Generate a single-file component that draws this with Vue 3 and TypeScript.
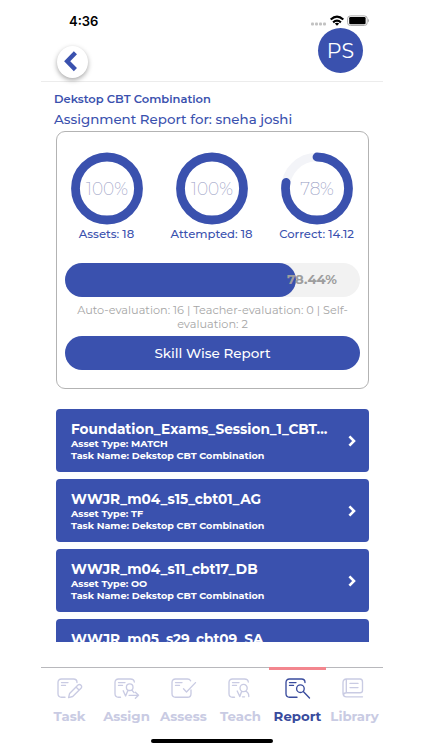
<script setup lang="ts">
interface Ring {
  percent: number
  label: string
}
interface Asset {
  name: string
  type?: string
}
interface Tab {
  label: string
  icon: string
  active?: boolean
}

const circumference = 2 * Math.PI * 31.5

const rings: Ring[] = [
  { percent: 100, label: 'Assets: 18' },
  { percent: 100, label: 'Attempted: 18' },
  { percent: 78, label: 'Correct: 14.12' },
]

const assets: Asset[] = [
  { name: 'Foundation_Exams_Session_1_CBT...', type: 'MATCH' },
  { name: 'WWJR_m04_s15_cbt01_AG', type: 'TF' },
  { name: 'WWJR_m04_s11_cbt17_DB', type: 'OO' },
  { name: 'WWJR_m05_s29_cbt09_SA' },
]

const frame = 'M6.5 19.2H4.5Q1 19.2 1 15.7V4.5Q1 1 4.5 1H16.5Q20 1 20.3 4'
const lines = 'M4.5 4.6H11M4.5 7.4H8.5'
const person = 'M12.4 9.2a3.3 3.3 0 1 0 6.6 0a3.3 3.3 0 1 0 -6.6 0M14 12.2L11.6 18L9.2 12.8'

const tabs: Tab[] = [
  { label: 'Task', icon: `M8 19.2H4.5Q1 19.2 1 15.7V4.5Q1 1 4.5 1H16.5Q20 1 20 4.5${lines}M11.6 19.6L12.6 15.4L21 7Q22.6 5.8 24 7.2Q25.3 8.6 24 10.2L15.7 18.5ZM19 9L22 12` },
  { label: 'Assign', icon: `${frame}${lines}${person}M17.7 12L20 14.6M15 17.3H24.5M21.4 14.2L24.5 17.3L21.4 20.3` },
  { label: 'Assess', icon: `M20 12V15.7Q20 19.2 16.5 19.2H4.5Q1 19.2 1 15.7V4.5Q1 1 4.5 1H16.5Q18.7 1 19.6 2.8${lines}M12.5 10.8L15.5 14L24.5 4.6` },
  { label: 'Teach', icon: `${frame}${lines}M12 10a3.6 3.6 0 1 0 7.2 0a3.6 3.6 0 1 0 -7.2 0M13.7 13.2L11.8 18.5L9.2 13M17.7 13.2Q20.8 14.4 20.8 18.5M14.5 18.8H16.5` },
  { label: 'Report', icon: `M12 19.2H4.5Q1 19.2 1 15.7V4.5Q1 1 4.5 1H16.5Q20 1 20 4.5${lines}M11.6 10.7a3.8 3.8 0 1 0 7.6 0a3.8 3.8 0 1 0 -7.6 0M18.3 13.5L24.5 20`, active: true },
  { label: 'Library', icon: 'M20.5 18.8H4.5Q1 18.8 1 15.3V4.5Q1 1 4.5 1H18Q20.5 1 20.5 4V12.5Q20.5 14.7 18 14.7H4.5Q1.5 14.7 1.5 17M4.3 1.3V14.5M8 5.4H16M8 9.6H16' },
]
</script>

<template>
  <main class="screen">
    <div class="status">
      <span class="time">4:36</span>
      <svg class="signals" width="60" height="12" viewBox="0 0 60 12">
        <g fill="#c2c2c2">
          <rect x="1" y="7.4" width="3" height="3" rx="1" />
          <rect x="5" y="7.4" width="3" height="3" rx="1" />
          <rect x="9" y="7.4" width="3" height="3" rx="1" />
          <rect x="13" y="7.4" width="3" height="3" rx="1" />
        </g>
        <g fill="none" stroke="#000" stroke-width="2.2">
          <path d="M20.7 4.5Q27 -1.2 33.3 4.5" />
          <path d="M23.1 7.3Q27 3.9 30.9 7.3" />
        </g>
        <path d="M24.8 8.5Q27 7 29.2 8.5L27 10.8Z" />
        <rect x="37.6" y="0.9" width="19.6" height="9.6" rx="2.8" fill="#fff" stroke="#aaa" />
        <rect x="39.2" y="2.1" width="16.4" height="7.2" rx="1.2" />
        <path d="M58 3.8Q60 5.6 58 7.4Z" fill="#aaa" />
      </svg>
    </div>

    <header class="header">
      <button class="back" aria-label="Back">
        <svg width="14" height="21" viewBox="0 0 14 21">
          <path d="M11.4 1.8L3.2 10.2L11.4 18.6" fill="none" stroke="#3a51ae" stroke-width="4.4" />
        </svg>
      </button>
      <div class="avatar">PS</div>
    </header>

    <section class="content">
      <h1 class="title">Dekstop CBT Combination</h1>
      <h2 class="subtitle">Assignment Report for: sneha joshi</h2>

      <div class="card">
        <div class="rings">
          <div v-for="ring in rings" :key="ring.label" class="ring">
            <svg width="72" height="73" viewBox="0 0 72 73">
              <circle cx="36" cy="36.5" r="31.5" fill="none" stroke="#f3f4f8" stroke-width="8.6" />
              <circle
                cx="36" cy="36.5" r="31.5" fill="none" stroke="#3a51ae" stroke-width="8.8"
                stroke-linecap="round" transform="rotate(-90 36 36.5)"
                :stroke-dasharray="`${circumference * ring.percent / 100} ${circumference}`"
              />
              <text class="ring-value" x="36" y="43.2" text-anchor="middle">{{ ring.percent }}%</text>
            </svg>
            <span class="ring-label">{{ ring.label }}</span>
          </div>
        </div>

        <div class="progress">
          <div class="fill" :style="{ width: '78.44%' }"></div>
          <span class="progress-value">78.44%</span>
        </div>
        <p class="evaluation">Auto-evaluation: 16 | Teacher-evaluation: 0 | Self-<br>evaluation: 2</p>
        <button class="skill">Skill Wise Report</button>
      </div>

      <div class="list">
        <article v-for="asset in assets" :key="asset.name" class="asset">
          <div class="asset-text">
            <h3>{{ asset.name }}</h3>
            <template v-if="asset.type">
              <p>Asset Type: {{ asset.type }}</p>
              <p>Task Name: Dekstop CBT Combination</p>
            </template>
          </div>
          <svg v-if="asset.type" width="8" height="12" viewBox="0 0 8 12">
            <path d="M1.4 1.3L6 6L1.4 10.7" fill="none" stroke="#fff" stroke-width="2.6" />
          </svg>
        </article>
      </div>
    </section>

    <nav class="tabs">
      <a v-for="tab in tabs" :key="tab.label" class="tab" :class="{ active: tab.active }">
        <svg width="26" height="21" viewBox="0 0 26 21">
          <path :d="tab.icon" />
        </svg>
        <span>{{ tab.label }}</span>
      </a>
    </nav>
    <div class="home"></div>
  </main>
</template>

<style>
body {
  margin: 0;
  background: #fff;
}
</style>

<style scoped>
* {
  box-sizing: border-box;
}
h1, h2, h3, p {
  margin: 0;
  white-space: nowrap;
}
button {
  border: 0;
  padding: 0;
  font: inherit;
}
.screen {
  width: 342px;
  height: 750px;
  margin-left: 41px;
  display: flex;
  flex-direction: column;
  overflow: hidden;
  font-family: Montserrat, Inter, "Open Sans", sans-serif;
  color: #3a51ae;
}
.status {
  display: flex;
  justify-content: space-between;
  height: 28px;
  padding: 15px 13px 0 28px;
  color: #000;
}
.time {
  font-family: Inter, sans-serif;
  font-size: 13px;
  line-height: 12px;
  font-weight: 600;
}
.header {
  display: flex;
  justify-content: space-between;
  height: 54px;
  padding: 0 20px 0 16px;
  border-bottom: 1px solid #ececec;
}
.back {
  display: flex;
  align-items: center;
  justify-content: center;
  width: 31px;
  height: 32px;
  margin-top: 18px;
  padding: 0 4px 2px 0;
  border-radius: 50%;
  background: #fff;
  box-shadow: 0 2px 5px rgba(0, 0, 0, 0.35);
}
.avatar {
  width: 45px;
  height: 45px;
  border-radius: 50%;
  background: #3a51ae;
  color: #fff;
  font-size: 20.5px;
  line-height: 45px;
  font-weight: 400;
  text-align: center;
}
.content {
  height: 560px;
  padding: 9px 14px 0 13px;
  overflow: hidden;
}
.title {
  font-size: 11.5px;
  line-height: 16px;
  font-weight: 600;
}
.subtitle {
  margin-top: 3px;
  font-size: 13.4px;
  line-height: 18px;
  font-weight: 500;
}
.card {
  width: 313px;
  height: 258px;
  margin: 3px 0 0 2px;
  padding: 19.5px 8px 0;
  border: 1px solid #b3b3b3;
  border-radius: 9px;
}
.rings {
  display: grid;
  grid-template-columns: repeat(3, 105px);
  margin-left: -11px;
}
.ring {
  display: flex;
  flex-direction: column;
  align-items: center;
}
.ring svg {
  display: block;
}
.ring-value {
  fill: #9499c2;
  font-size: 19.5px;
  font-weight: 200;
  transform: scaleX(0.87);
  transform-box: fill-box;
  transform-origin: center;
}
.ring-label {
  font-size: 11.6px;
  line-height: 16px;
  font-weight: 500;
  margin-top: 1px;
  white-space: nowrap;
}
.progress {
  position: relative;
  height: 34px;
  margin-top: 21.5px;
  border-radius: 17px;
  background: #f2f2f2;
}
.fill {
  height: 34px;
  border-radius: 17px;
  background: #3a51ae;
}
.progress-value {
  position: absolute;
  left: 222px;
  top: 7px;
  font-size: 13.3px;
  line-height: 18px;
  font-weight: 700;
  color: #9e9e9e;
}
.evaluation {
  margin-top: 6px;
  font-size: 11.3px;
  line-height: 14px;
  text-align: center;
  color: #a6a6a6;
}
.skill {
  display: block;
  width: 100%;
  height: 34px;
  margin-top: 5px;
  border-radius: 17px;
  background: #3a51ae;
  color: #fff;
  font-size: 13.5px;
  font-weight: 500;
}
.list {
  display: flex;
  flex-direction: column;
  gap: 6.6px;
  width: 313px;
  margin: 19.5px 0 0 2px;
}
.asset {
  display: flex;
  justify-content: space-between;
  flex: none;
  height: 63.5px;
  padding: 11px 13px 0 15px;
  border-radius: 4px;
  background: #3a51ae;
  color: #fff;
}
.asset > svg {
  margin-top: 15px;
}
.asset h3 {
  font-size: 13.7px;
  line-height: 18px;
  font-weight: 700;
}
.asset p {
  font-size: 9.6px;
  line-height: 12px;
  font-weight: 700;
}
.tabs {
  display: grid;
  grid-template-columns: repeat(6, 57px);
  height: 64px;
  margin-top: 25px;
  border-top: 1px solid #b8b8bc;
}
.tab {
  display: flex;
  flex-direction: column;
  align-items: center;
  margin-top: -1px;
  padding-top: 8px;
  border-top: 3px solid transparent;
  color: #c9cbe3;
  font-size: 13.3px;
  line-height: 18px;
  font-weight: 700;
}
.tab.active {
  border-top-color: #f3868e;
  color: #394b9d;
}
.tab path {
  fill: none;
  stroke: currentColor;
  stroke-width: 1.35;
  stroke-linecap: round;
  stroke-linejoin: round;
}
.tab span {
  margin-top: 8px;
}
.home {
  width: 122px;
  height: 4px;
  margin: 8px 0 0 110px;
  border-radius: 2px;
  background: #000;
}
</style>
